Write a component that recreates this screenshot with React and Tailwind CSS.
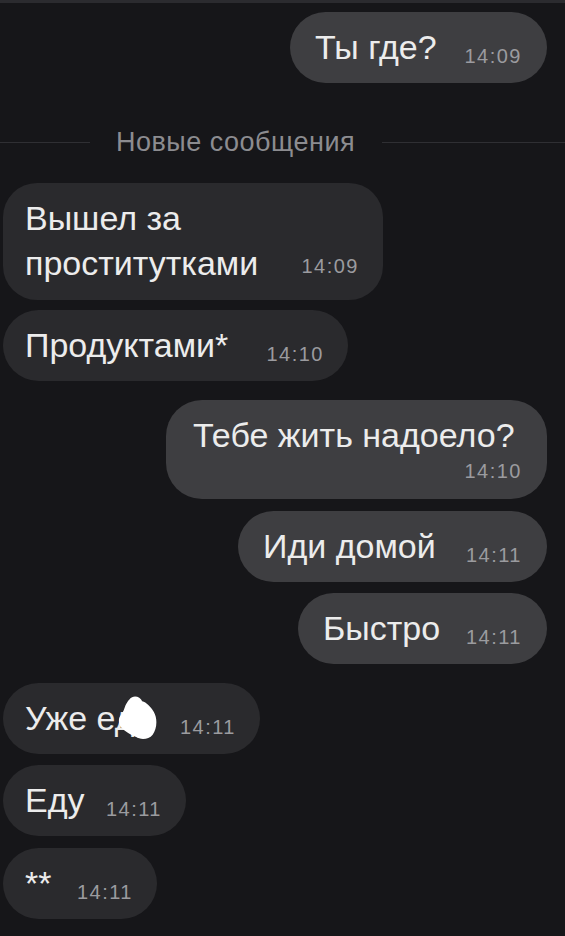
import React from "react"

const font = { fontFamily: '"Liberation Sans", Arial, sans-serif' }

const Time = ({ children, className = "" }) => (
  <span
    className={`text-[20px] leading-none tracking-[1.5px] text-[#9b9b9f] whitespace-nowrap translate-y-[4px] ${className}`}
  >
    {children}
  </span>
)

const Msg = ({ text }) => (
  <span className="text-[34px] leading-[71px] text-[#ececec] whitespace-nowrap">{text}</span>
)

const Out = ({ text, time, w }) => (
  <div className="flex justify-end pr-[18px]">
    <div className={`flex items-baseline justify-between h-[71px] rounded-full bg-[#3e3e41] pl-[25px] pr-[25px] ${w}`}>
      <Msg text={text} />
      <Time>{time}</Time>
    </div>
  </div>
)

const In = ({ text, time, w, extra = null }) => (
  <div className="flex justify-start pl-[3px]">
    <div className={`relative flex items-baseline justify-between h-[71px] rounded-full bg-[#2a2a2d] pl-[22px] pr-[24px] ${w}`}>
      <Msg text={text} />
      <Time>{time}</Time>
      {extra}
    </div>
  </div>
)

export default function App() {
  return (
    <div className="w-[565px] h-[936px] overflow-hidden bg-[#161619]" style={font}>
      <div className="h-[3px] bg-[#2b2b2f]" />
      <div className="pt-[9px] flex flex-col">
        <Out text="Ты где?" time="14:09" w="w-[257px]" />

        <div className="flex items-center mt-[44px] mb-[26px] h-[30px]">
          <div className="w-[90px] h-px bg-[#2f2f33]" />
          <span className="pl-[26px] pr-[27px] text-[27px] tracking-[0.5px] text-[#8c8c90] whitespace-nowrap">
            Новые сообщения
          </span>
          <div className="flex-1 h-px bg-[#2f2f33]" />
        </div>

        <div className="flex justify-start pl-[3px]">
          <div className="flex items-end justify-between w-[380px] h-[117px] rounded-[34px] bg-[#2a2a2d] pl-[22px] pr-[24px] pt-[14px] pb-[14px]">
            <span className="text-[34px] leading-[45px] text-[#ececec]">
              Вышел за
              <br />
              проститутками
            </span>
            <Time className="mb-[14px]">14:09</Time>
          </div>
        </div>

        <div className="mt-[10px]">
          <In text="Продуктами*" time="14:10" w="w-[345px]" />
        </div>

        <div className="mt-[19px] flex justify-end pr-[18px]">
          <div className="flex flex-col items-end w-[381px] h-[99px] rounded-[36px] bg-[#3e3e41] pl-[27px] pr-[25px] pt-[14px]">
            <span className="self-start text-[34px] leading-[42px] text-[#ececec] whitespace-nowrap">
              Тебе жить надоело?
            </span>
            <span className="mt-[5px] text-[20px] leading-none tracking-[1.5px] text-[#9b9b9f]">14:10</span>
          </div>
        </div>

        <div className="mt-[12px]">
          <Out text="Иди домой" time="14:11" w="w-[309px]" />
        </div>
        <div className="mt-[11px]">
          <Out text="Быстро" time="14:11" w="w-[249px]" />
        </div>

        <div className="mt-[19px]">
          <In
            text="Уже еду"
            time="14:11"
            w="w-[257px]"
            extra={
              <svg className="absolute left-[113px] top-[13px] w-[44px] h-[44px]" viewBox="0 0 40 42">
                <path
                  d="M12 3 C15 -1 22 0 24 5 C28 6 32 10 35 15 C39 22 38 31 34 37 C30 42 22 42 18 39 C13 37 8 34 4 30 C1 26 1 21 4 18 C6 15 7 12 8 9 C9 7 10 5 12 3 Z"
                  fill="#ffffff"
                />
              </svg>
            }
          />
        </div>
        <div className="mt-[11px]">
          <In text="Еду" time="14:11" w="w-[183px]" />
        </div>
        <div className="mt-[12px]">
          <In text="**" time="14:11" w="w-[154px]" />
        </div>
      </div>
    </div>
  )
}
